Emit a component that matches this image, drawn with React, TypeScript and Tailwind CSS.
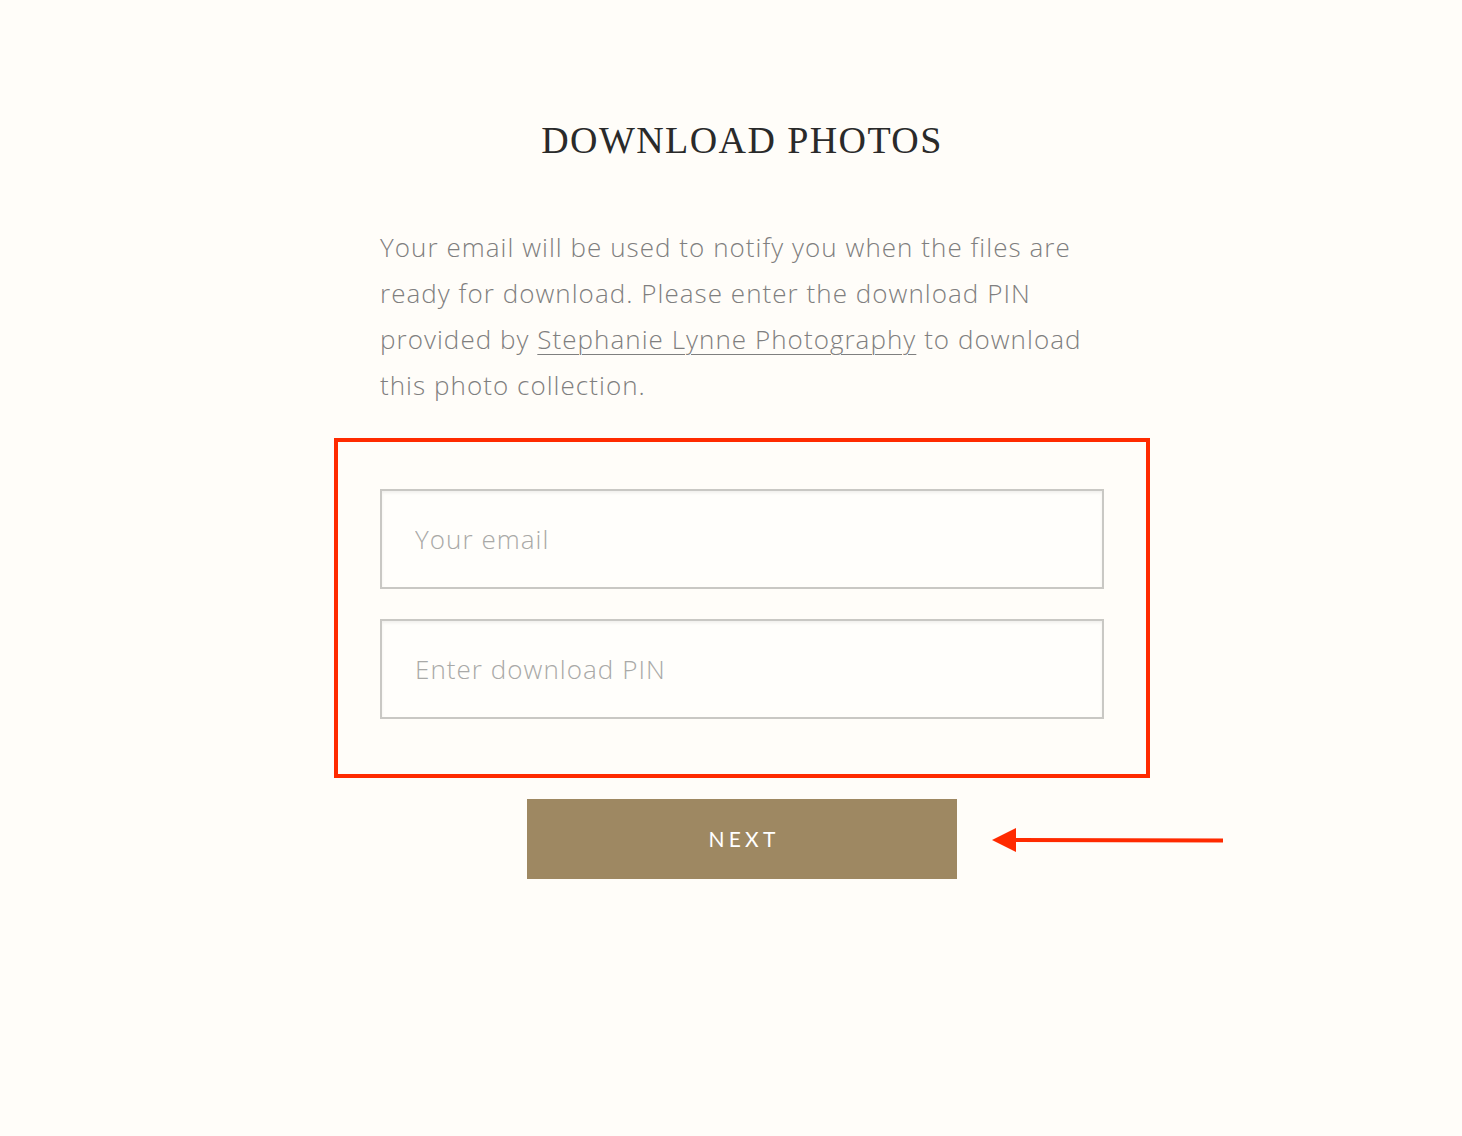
import React from "react";

const sans = { fontFamily: "'Open Sans', Lato, sans-serif" };

function Field({ placeholder }: { placeholder: string }) {
  return (
    <input
      type="text"
      placeholder={placeholder}
      className="block w-[724px] h-[100px] border-2 border-[#c9c8c4] bg-[#fffefb] px-[33px] text-[26px] tracking-[0.04em] font-light text-[#777] placeholder:text-[#a9a9a7] shadow-[inset_0_2px_3px_rgba(0,0,0,0.06)] outline-none"
      style={sans}
    />
  );
}

export default function App() {
  return (
    <div className="min-h-[1136px] w-full bg-[#fffdf9] flex flex-col items-center pt-[118px] pl-[22px]">
      <h1
        className="text-[38px] leading-[44px] tracking-[0.037em] text-[#2a2a2a]"
        style={{ fontFamily: "'Liberation Serif', 'DejaVu Serif', serif" }}
      >
        DOWNLOAD PHOTOS
      </h1>

      <p
        className="mt-[62px] w-[724px] text-[26px] leading-[46px] tracking-[0.04em] font-light text-[#7f7f7f] whitespace-nowrap"
        style={sans}
      >
        Your email will be used to notify you when the files are
        <br />
        ready for download. Please enter the download PIN
        <br />
        provided by{" "}
        <a href="#" className="underline underline-offset-[5px] decoration-1">
          Stephanie Lynne Photography
        </a>{" "}
        to download
        <br />
        this photo collection.
      </p>

      {/* highlighted form fields */}
      <div className="mt-[30px] w-[816px] border-4 border-[#ff2a00] px-[42px] pt-[47px] pb-[55px] flex flex-col gap-[30px]">
        <Field placeholder="Your email" />
        <Field placeholder="Enter download PIN" />
      </div>

      <div className="relative mt-[21px]">
        <button
          className="w-[430px] h-[80px] bg-[#9e8862] text-white text-[21px] tracking-[0.2em] pl-[4px]"
          style={{ fontFamily: "Lato, sans-serif" }}
        >
          NEXT
        </button>
        {/* pointer arrow */}
        <svg
          className="absolute left-[464px] top-[27px]"
          width="234"
          height="28"
          viewBox="0 0 234 28"
        >
          <line x1="20" y1="14" x2="232" y2="14.5" stroke="#ff2a00" strokeWidth="4" />
          <polygon points="1,14 25,2 25,26" fill="#ff2a00" />
        </svg>
      </div>
    </div>
  );
}
